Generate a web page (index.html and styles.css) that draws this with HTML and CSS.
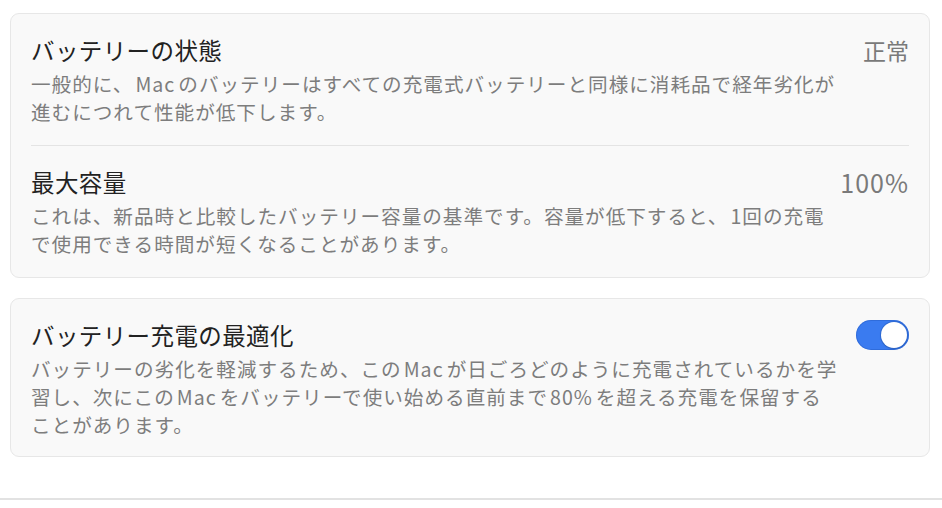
FILE: index.html
```html
<!DOCTYPE html>
<html lang="ja">
<head>
<meta charset="utf-8">
<link rel="stylesheet" href="styles.css">
</head>
<body>
<div class="page">
  <section class="card">
    <div class="row">
      <div class="row-text">
        <div class="title">バッテリーの状態</div>
        <div class="desc">一般的に、<span class="lat">Mac</span>のバッテリーはすべての充電式バッテリーと同様に消耗品で経年劣化が<br>進むにつれて性能が低下します。</div>
      </div>
      <div class="value">正常</div>
    </div>
    <div class="row row-sep">
      <div class="row-text">
        <div class="title">最大容量</div>
        <div class="desc">これは、新品時と比較したバッテリー容量の基準です。容量が低下すると、<span class="lat-l">1</span>回の充電<br>で使用できる時間が短くなることがあります。</div>
      </div>
      <div class="value num">100%</div>
    </div>
  </section>
  <section class="card">
    <div class="row row-last">
      <div class="row-text">
        <div class="title">バッテリー充電の最適化</div>
        <div class="desc">バッテリーの劣化を軽減するため、この<span class="lat">Mac</span>が日ごろどのように充電されているかを学<br>習し、次にこの<span class="lat">Mac</span>をバッテリーで使い始める直前まで<span class="lat">80%</span>を超える充電を保留する<br>ことがあります。</div>
      </div>
      <div class="toggle on"><span class="knob"></span></div>
    </div>
  </section>
</div>
<div class="footer-line"></div>
</body>
</html>
```
FILE: styles.css
```css
html, body {
  margin: 0;
  padding: 0;
  background: #ffffff;
}
body {
  font-family: "Noto Sans CJK JP", "Noto Sans", sans-serif;
  width: 942px;
  height: 508px;
  overflow: hidden;
}
.page {
  padding: 13px 12px 0 10px;
  display: flex;
  flex-direction: column;
  gap: 20px;
}
.card {
  background: #f9f9f9;
  border: 1px solid #e7e7e7;
  border-radius: 9px;
  padding: 0 20px;
}
.row {
  display: flex;
  justify-content: space-between;
  align-items: flex-start;
  padding: 21px 0 19px;
}
.row-last {
  padding-bottom: 17px;
}
.row-sep {
  border-top: 1px solid #e4e4e4;
}
.row-text {
  display: flex;
  flex-direction: column;
  gap: 5px;
}
.title {
  font-size: 23.5px;
  line-height: 30px;
  letter-spacing: 0.4px;
  color: #222222;
  white-space: nowrap;
}
.desc {
  font-size: 19.6px;
  line-height: 28px;
  letter-spacing: 1px;
  color: #7d7d7d;
  white-space: nowrap;
}
.lat {
  margin: 0 3px 0 2px;
}
.lat-l {
  margin-left: 2px;
}
.value {
  font-size: 23px;
  line-height: 30px;
  color: #7a7a7a;
  white-space: nowrap;
}
.num {
  font-size: 25px;
  letter-spacing: 1px;
}
.toggle {
  width: 53px;
  height: 30px;
  border-radius: 15px;
  background: #3a7bf0;
  display: flex;
  align-items: center;
  justify-content: flex-end;
  padding: 0 2px;
  box-sizing: border-box;
  flex: none;
  box-shadow: inset 0 0 0 1px rgba(30, 80, 180, 0.35);
}
.knob {
  width: 26px;
  height: 26px;
  border-radius: 50%;
  background: #ffffff;
  box-shadow: 0 0 0 1px rgba(30, 80, 170, 0.35), 0 1px 2px rgba(0, 0, 0, 0.15);
}
.footer-line {
  margin-top: 41px;
  height: 2px;
  background: #e2e2e2;
}
```
